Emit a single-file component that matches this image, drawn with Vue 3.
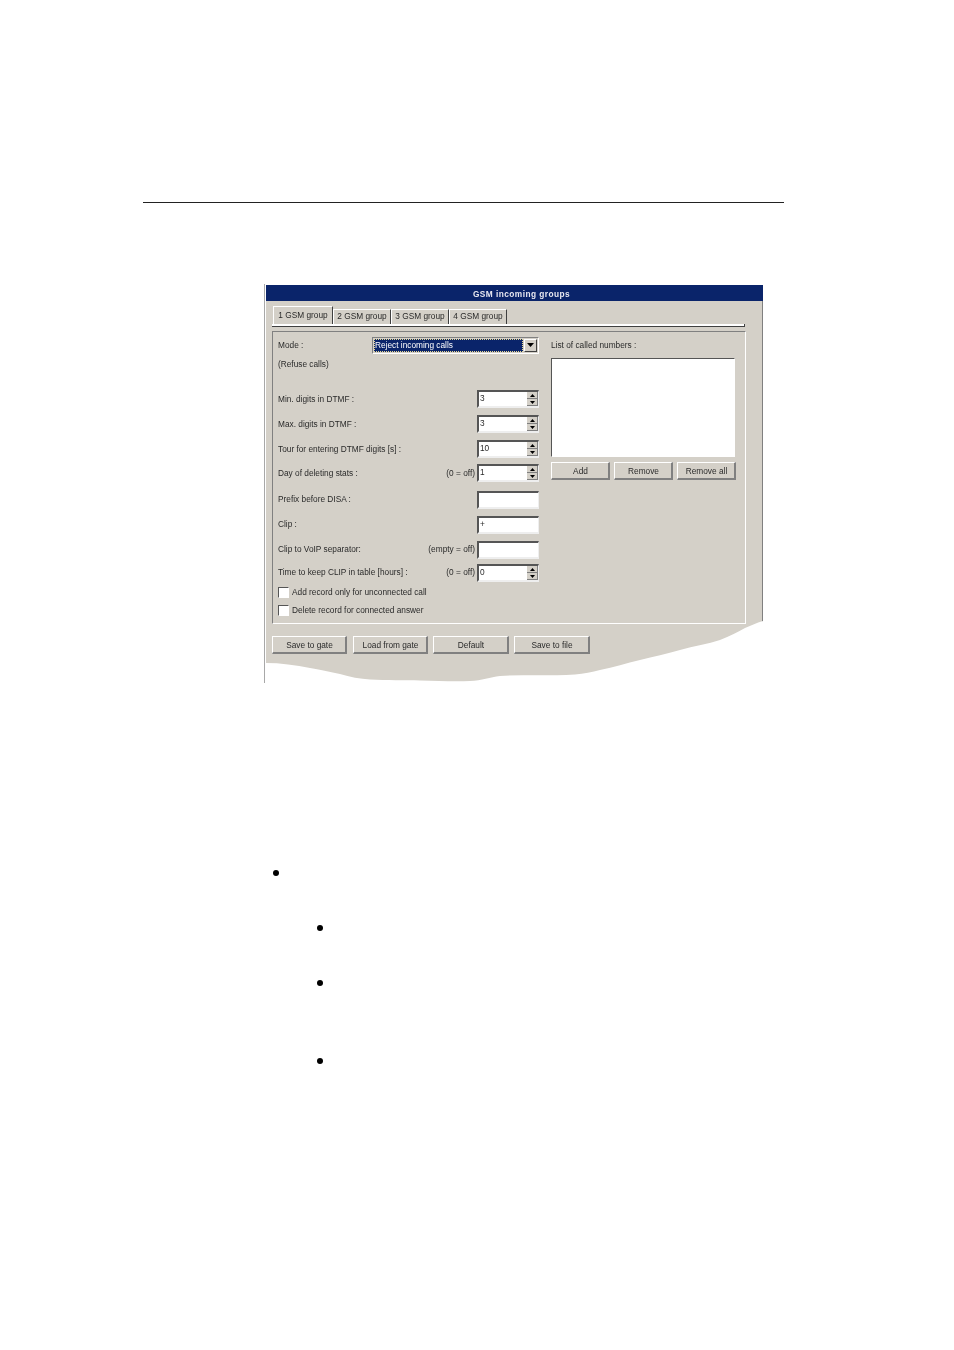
<script setup>
const tabs = ['1 GSM group', '2 GSM group', '3 GSM group', '4 GSM group']
const rows = [
  { label: 'Min. digits in DTMF :', value: '3', spin: true, cls: 'first' },
  { label: 'Max. digits in DTMF :', value: '3', spin: true },
  { label: 'Tour for entering DTMF digits [s] :', value: '10', spin: true },
  { label: 'Day of deleting stats :', hint: '(0 = off)', value: '1', spin: true, cls: 'tight' },
  { label: 'Prefix before DISA :', value: '', cls: 'wide up' },
  { label: 'Clip :', value: '+', cls: 'up' },
  { label: 'Clip to VoIP separator:', hint: '(empty = off)', value: '', cls: 'up' },
  { label: 'Time to keep CLIP in table [hours] :', hint: '(0 = off)', value: '0', spin: true, cls: 'last up' }
]
const checks = ['Add record only for unconnected call', 'Delete record for connected answer']
const listButtons = ['Add', 'Remove', 'Remove all']
const footButtons = ['Save to gate', 'Load from gate', 'Default', 'Save to file']
const bullets = ['b0', 'b1', 'b2', 'b3']
</script>

<template>
  <div class="page">
    <div class="rule"></div>
    <div class="figure">
      <div class="dialog">
        <div class="title">GSM incoming groups</div>
        <div class="tabs">
          <div v-for="(t, i) in tabs" :key="t" class="tab" :class="{ active: i === 0 }">{{ t }}</div>
        </div>
        <div class="pane-line"></div>
        <div class="group">
          <div class="left">
            <div class="mode">
              <span>Mode :</span>
              <div class="combo">
                <div class="combo-value"><span>Reject incoming calls</span></div>
                <div class="arrow-btn">
                  <svg width="7" height="4" viewBox="0 0 7 4"><path d="M0 0h7L3.500 4z" fill="#000" /></svg>
                </div>
              </div>
            </div>
            <div class="refuse">(Refuse calls)</div>
            <div v-for="r in rows" :key="r.label" class="row" :class="r.cls">
              <span class="label">{{ r.label }}</span>
              <span v-if="r.hint" class="hint">{{ r.hint }}</span>
              <div class="field">
                <span class="val">{{ r.value }}</span>
                <div v-if="r.spin" class="spin">
                  <div class="spin-btn"><svg width="5" height="3" viewBox="0 0 5 3"><path d="M2.500 0L5 3H0z" fill="#000" /></svg></div>
                  <div class="spin-btn"><svg width="5" height="3" viewBox="0 0 5 3"><path d="M0 0h5L2.500 3z" fill="#000" /></svg></div>
                </div>
              </div>
            </div>
            <div class="checks">
              <div v-for="c in checks" :key="c" class="check"><i class="box"></i><span>{{ c }}</span></div>
            </div>
          </div>
          <div class="right">
            <div class="list-label">List of called numbers :</div>
            <div class="listbox"></div>
            <div class="list-btns">
              <div v-for="b in listButtons" :key="b" class="btn">{{ b }}</div>
            </div>
          </div>
        </div>
        <div class="foot">
          <div v-for="b in footButtons" :key="b" class="btn foot-btn">{{ b }}</div>
        </div>
        <svg class="torn" width="497" height="397" viewBox="0 0 497 397">
          <path d="M0 378C14 378 30 380 44 383C56 385 64 387 74 389C84 392 94 394 104 394.500C120 395.500 140 395 154 395.500C172 396 190 396.500 204 396C216 395.500 224 392 234 391C258 389.500 286 391 309 389.500C318 388.500 326 387 334 385C348 382 360 378.500 374 375C388 371.500 400 369 414 365C428 361 442 359 454 355C464 351 472 347 479 343C486 340 490 338 497 336V397H0z" fill="#fff" />
        </svg>
      </div>
    </div>
    <div class="bullets">
      <i v-for="b in bullets" :key="b" class="dot" :class="b"></i>
    </div>
  </div>
</template>

<style>
html, body { margin: 0; background: #fff; }
</style>

<style scoped>
.page { width: 954px; height: 1350px; background: #fff; overflow: hidden; font-family: "Liberation Sans", Arial, sans-serif; }
.rule { height: 1px; width: 641px; margin-left: 143px; background: #222; position: relative; top: 202px; }
.figure { margin: 283px 0 0 264px; width: 499px; height: 399px; border-left: 1px solid #a8a8a8; padding-left: 1px; box-sizing: border-box; padding-top: 1px; }
.dialog { position: relative; width: 497px; height: 397px; background: #d4d0c8; font-size: 8.3px; color: #2a2a2a; border-right: 1px solid #808080; box-sizing: border-box; }
.dialog > *:not(.torn) { filter: blur(0.3px); }
.title { height: 16px; background: #0a246a; color: #e8e8f0; font-weight: 700; font-size: 8.3px; letter-spacing: .45px; line-height: 18px; text-align: center; padding-left: 14px; margin-right: -1px; }
.tabs { display: flex; align-items: flex-end; margin: 6px 0 0 7px; height: 17px; }
.tab { width: 58px; height: 15px; line-height: 12px; text-align: center; border-top: 1px solid #fff; border-left: 1px solid #fff; border-right: 1px solid #404040; box-sizing: border-box; }
.tab.active { width: 60px; height: 18px; line-height: 16px; }
.pane-line { height: 2px; margin: 0 17px 0 6px; background: #fff; border-bottom: 1px solid #404040; border-right: 1px solid #404040; }
.group { display: flex; gap: 12px; height: 293px; width: 474px; margin: 4px 0 0 6px; padding: 5px 0 0 5px; box-sizing: border-box; border-top: 1px solid #808080; border-left: 1px solid #808080; border-right: 1px solid #fff; border-bottom: 1px solid #fff; }
.left { width: 261px; flex: none; }
.mode { display: flex; align-items: center; justify-content: space-between; height: 16px; }
.combo { width: 167px; height: 17px; display: flex; align-items: center; border: 1px solid #fff; border-top-color: #808080; border-left-color: #808080; box-sizing: border-box; }
.combo-value { flex: 1; height: 13px; margin-left: 1px; background: #0a246a; color: #fff; line-height: 13px; padding-left: 1px; outline: 1px dotted #e8d890; outline-offset: -1px; }
.arrow-btn { width: 13px; height: 13px; margin: 0 1px; display: flex; align-items: center; justify-content: center; background: #d4d0c8; border: 1px solid #fff; border-right-color: #404040; border-bottom-color: #404040; box-sizing: border-box; }
.refuse { height: 12px; line-height: 12px; margin-top: 5px; }
.row { display: flex; align-items: center; height: 18px; margin-top: 7px; }
.row.first { margin-top: 20px; }
.row.tight { margin-top: 6px; }
.row.wide { margin-top: 9px; }
.row.last { margin-top: 5px; }
.row.up .label, .row.up .hint { padding-bottom: 3px; }
.label { flex: 1; }
.hint { margin-right: 2px; }
.field { width: 62px; height: 18px; flex: none; display: flex; justify-content: space-between; align-items: center; background: #fff; border: 2px solid #d4d0c8; border-top-color: #555; border-left-color: #555; border-right: 1px solid #eee; border-bottom-color: #eee; box-sizing: border-box; }
.val { padding-left: 1px; line-height: 12px; padding-bottom: 3px; }
.spin { width: 11px; height: 14px; display: flex; flex-direction: column; }
.spin-btn { flex: 1; display: flex; align-items: center; justify-content: center; background: #d4d0c8; border-right: 1px solid #808080; border-bottom: 1px solid #808080; }
.checks { margin-top: 3px; }
.check { display: flex; align-items: center; gap: 3px; height: 14px; margin-bottom: 4px; }
.box { width: 9px; height: 9px; background: #fff; border: 1px solid #fff; border-top-color: #555; border-left-color: #555; flex: none; }
.right { width: 185px; flex: none; }
.list-label { height: 14px; line-height: 14px; margin-top: 1px; }
.listbox { height: 99px; width: 184px; margin-top: 6px; background: #fff; box-sizing: border-box; border: 1px solid #fff; border-top-color: #555; border-left-color: #555; }
.list-btns { display: grid; grid-template-columns: repeat(3, 59px); gap: 4px; margin-top: 5px; }
.btn { height: 18px; line-height: 17px; padding-left: 1px; text-align: center; box-sizing: border-box; background: #d4d0c8; border: 1px solid #fff; border-right: 2px solid #808080; border-bottom: 2px solid #808080; }
.foot { display: flex; margin: 12px 0 0 6px; }
.foot-btn { width: 75px; margin-right: 6px; }
.foot-btn:nth-child(n+2) { margin-right: 5px; }
.foot-btn:nth-child(n+3) { width: 76px; }
.torn { position: absolute; left: 0; top: 0; }
.bullets { position: relative; top: 0; margin-top: 187px; display: flex; flex-direction: column; }
.dot { width: 6px; height: 6px; border-radius: 50%; background: #000; display: block; margin-left: 317px; }
.dot.b0 { margin-left: 273px; margin-top: 0; }
.dot.b1 { margin-top: 49px; }
.dot.b2 { margin-top: 49px; }
.dot.b3 { margin-top: 72px; }
</style>
